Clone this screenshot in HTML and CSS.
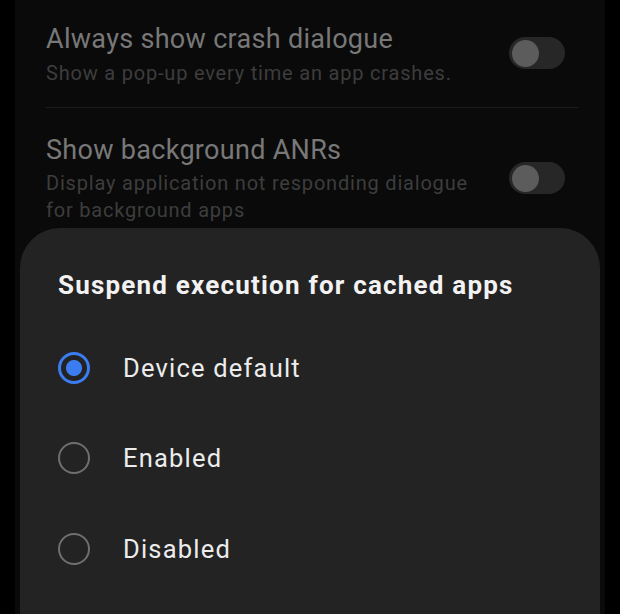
FILE: index.html
```html
<!DOCTYPE html>
<html lang="en">
<head>
    <meta charset="UTF-8">
    <meta name="viewport" content="width=device-width, initial-scale=1.0">
    <title>Developer options</title>
    <link rel="stylesheet" href="styles.css">
</head>
<body>
    <div class="screen">
        <div class="settings">
            <div class="setting-row">
                <div class="setting-text">
                    <div class="setting-title">Always show crash dialogue</div>
                    <div class="setting-summary">Show a pop-up every time an app crashes.</div>
                </div>
                <div class="switch"><span class="knob"></span></div>
            </div>
            <div class="divider"></div>
            <div class="setting-row second">
                <div class="setting-text">
                    <div class="setting-title">Show background ANRs</div>
                    <div class="setting-summary">Display application not responding dialogue for background apps</div>
                </div>
                <div class="switch"><span class="knob"></span></div>
            </div>
        </div>

        <div class="sheet">
            <h2 class="sheet-title">Suspend execution for cached apps</h2>
            <div class="option selected">
                <span class="radio"></span>
                <span class="option-label">Device default</span>
            </div>
            <div class="option">
                <span class="radio"></span>
                <span class="option-label">Enabled</span>
            </div>
            <div class="option">
                <span class="radio"></span>
                <span class="option-label">Disabled</span>
            </div>
        </div>
    </div>
</body>
</html>
```

FILE: styles.css
```css
body {
    margin: 0;
    background-color: #000;
    font-family: Roboto, 'Noto Sans', sans-serif;
}
.screen {
    position: relative;
    width: 620px;
    height: 614px;
    overflow: hidden;
}
.settings {
    margin: 0 15px;
    height: 614px;
    background-color: #0a0a0a;
    padding: 0 31px;
}
.setting-row {
    display: flex;
    justify-content: space-between;
    padding-top: 20px;
}
.setting-row.second {
    padding-top: 23px;
}
.setting-text {
    width: 440px;
}
.setting-title {
    font-size: 27px;
    line-height: 38px;
    color: #787878;
    letter-spacing: 0.3px;
}
.setting-summary {
    margin-top: 2px;
    font-size: 20px;
    line-height: 27px;
    color: #3d3d3d;
    letter-spacing: 0.8px;
}
.second .setting-summary {
    margin-top: 1px;
}
.switch {
    position: relative;
    width: 56px;
    height: 32px;
    border-radius: 16px;
    background-color: #272727;
    margin-top: 17px;
    margin-right: 9px;
}
.second .switch {
    margin-top: 31px;
}
.knob {
    position: absolute;
    left: 3px;
    top: 2.5px;
    width: 27px;
    height: 27px;
    border-radius: 50%;
    background-color: #5c5c5c;
}
.divider {
    height: 1px;
    background-color: #1c1c1c;
    margin-top: 20px;
    margin-right: -4px;
}
.sheet {
    position: absolute;
    left: 20px;
    right: 20px;
    top: 228px;
    height: 420px;
    background-color: #232323;
    border-radius: 40px 40px 0 0;
    padding: 0 38px;
}
.sheet-title {
    margin: 0;
    padding-top: 40px;
    font-size: 26px;
    font-weight: 700;
    line-height: 34px;
    color: #f2f2f2;
    letter-spacing: 1.2px;
    white-space: nowrap;
}
.option {
    display: flex;
    align-items: center;
    height: 90.3px;
}
.option:first-of-type {
    margin-top: 21px;
}
.radio {
    box-sizing: border-box;
    width: 32px;
    height: 32px;
    border-radius: 50%;
    border: 2px solid #6f6f6f;
    margin-right: 33px;
    flex-shrink: 0;
}
.option.selected .radio {
    border: 3.3px solid #3b7df0;
    background: radial-gradient(circle, #3b7df0 0 7.5px, #232323 8.5px);
}
.option-label {
    font-size: 25.5px;
    color: #ececec;
    letter-spacing: 1.2px;
}
```
